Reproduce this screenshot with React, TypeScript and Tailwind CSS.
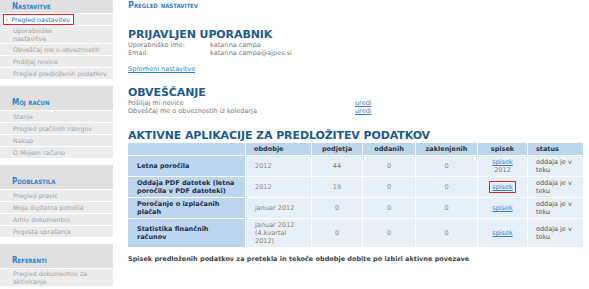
import React from "react";

interface MenuItem {
  label: React.ReactNode;
  active?: boolean;
  tall?: boolean;
}

interface MenuSection {
  title: string;
  items: MenuItem[];
  compact?: boolean;
}

const sections: MenuSection[] = [
  {
    title: "Nastavitve",
    compact: true,
    items: [
      { label: "Pregled nastavitev", active: true },
      {
        tall: true,
        label: (
          <>
            Uporabniške
            <br />
            nastavitve
          </>
        ),
      },
      { label: "Obveščaj me o obveznostih" },
      { label: "Podiljaj novice" },
      { label: "Pregled predloženih podatkov" },
    ],
  },
  {
    title: "Moj račun",
    items: [
      { label: "Stanje" },
      { label: "Pregled plačilnih nalogov" },
      { label: "Nakup" },
      { label: "O Mojem računu" },
    ],
  },
  {
    title: "Pooblastila",
    items: [
      { label: "Pregled pravic" },
      { label: "Moja digitalna potrdila" },
      { label: "Arhiv dokumentov" },
      { label: "Pogosta vprašanja" },
    ],
  },
  {
    title: "Referenti",
    items: [
      {
        tall: true,
        label: (
          <>
            Pregled dokumentov za
            <br />
            aktiviranje
          </>
        ),
      },
    ],
  },
];

interface Row {
  name: string;
  period: string;
  periodTan?: boolean;
  companies: string;
  companiesOlive?: boolean;
  submitted: string;
  locked: string;
  listYear?: string;
  boxed?: boolean;
}

const rows: Row[] = [
  { name: "Letna poročila", period: "2012", companies: "44", companiesOlive: true, submitted: "0", locked: "0", listYear: "2012" },
  { name: "Oddaja PDF datotek (letna poročila v PDF datoteki)", period: "2012", companies: "19", submitted: "0", locked: "0", boxed: true },
  { name: "Poročanje o izplačanih plačah", period: "januar 2012", periodTan: true, companies: "0", submitted: "0", locked: "0" },
  { name: "Statistika finančnih računov", period: "Januar 2012 (4.kvartal 2012)", periodTan: true, companies: "0", submitted: "0", locked: "0" },
];

const font = "font-['DejaVu_Sans',Verdana,sans-serif]";
const capsFont =
  "font-['DejaVu_Sans_Condensed','DejaVu_Sans',sans-serif] font-bold [font-variant:small-caps] text-[#2f7fc8]";

const Sidebar: React.FC = () => (
  <div className="w-[113px] shrink-0">
    {sections.map((section, i) => (
      <div key={i} className={i > 0 ? "mt-[7px]" : ""}>
        <div
          className={`bg-[#e0e0e0] pl-[12px] ${capsFont} text-[8px] leading-[9px] ${
            section.compact ? "h-[13px] pt-[2px]" : "h-[24px] pt-[12px]"
          }`}
        >
          {section.title}
        </div>
        {section.items.map((item, j) => (
          <div
            key={j}
            className={`flex items-center bg-[#ececec] border-t border-white pl-[4px] text-[6.3px] leading-[8px] ${
              item.tall ? "h-[18px]" : "h-[12px]"
            }`}
          >
            {item.active ? (
              <span className="flex items-center h-[11px] border border-[#e8202a] bg-white pl-[2px] pr-[3px] text-[#2b6fb5] -ml-[1px]">
                <span className="mr-[3px] text-[#555] text-[6px]">›</span>
                {item.label}
              </span>
            ) : (
              <span className="block pl-[9px] text-[#a3a3a3] whitespace-nowrap">{item.label}</span>
            )}
          </div>
        ))}
      </div>
    ))}
  </div>
);

const Heading: React.FC<{ children: React.ReactNode; className?: string }> = ({ children, className }) => (
  <h2 className={`text-[11px] leading-[10px] font-bold text-[#1e5a92] tracking-[-0.1px] ${className ?? ""}`}>{children}</h2>
);

const cellBase = "bg-[#e6f0f9] text-center align-middle text-[#8a8a8a] px-[4px] py-[2px]";

const App: React.FC = () => {
  return (
    <div className={`flex w-[589px] h-[289px] overflow-hidden bg-white ${font} text-[6.5px] leading-[8px]`}>
      <Sidebar />
      <div className="flex-1 pl-[15px] pr-[3px]">
        <div className={`${capsFont} text-[9px] leading-[9px] mt-[1px]`}>Pregled nastavitev</div>

        <Heading className="mt-[20px]">PRIJAVLJEN UPORABNIK</Heading>
        <div className="text-[#777] mt-[1px]">
          <div className="flex">
            <span className="w-[82px]">Uporabniško ime:</span>
            <span>katarina.campa</span>
          </div>
          <div className="flex">
            <span className="w-[82px]">Email:</span>
            <span>katarina.campa@ajpes.si</span>
          </div>
        </div>
        <a className="block mt-[8px] text-[#3a7cc2] underline">Spremeni nastavitve</a>

        <Heading className="mt-[15px]">OBVEŠČANJE</Heading>
        <div className="text-[#777] mt-[1px]">
          <div className="flex">
            <span className="w-[227px]">Pošiljaj mi novice</span>
            <a className="text-[#3a7cc2] underline">uredi</a>
          </div>
          <div className="flex">
            <span className="w-[227px]">Obveščaj me o obveznostih iz koledarja</span>
            <a className="text-[#3a7cc2] underline">uredi</a>
          </div>
        </div>

        <Heading className="mt-[16px]">AKTIVNE APLIKACIJE ZA PREDLOŽITEV PODATKOV</Heading>
        <table className="mt-[1px] w-[457px] table-fixed border-separate border-spacing-[1px] -ml-[1px]">
          <colgroup>
            <col className="w-[117px]" />
            <col className="w-[65px]" />
            <col className="w-[50px]" />
            <col className="w-[52px]" />
            <col className="w-[61px]" />
            <col className="w-[49px]" />
            <col className="w-[55px]" />
          </colgroup>
          <thead>
            <tr className="bg-[#bcd7ed] font-bold text-[#333]">
              <th className="py-[2px]"></th>
              <th className="py-[2px] text-left pl-[8px]">obdobje</th>
              <th className="py-[2px]">podjetja</th>
              <th className="py-[2px]">oddanih</th>
              <th className="py-[2px]">zaklenjenih</th>
              <th className="py-[2px]">spisek</th>
              <th className="py-[2px] text-left pl-[8px]">status</th>
            </tr>
          </thead>
          <tbody>
            {rows.map((row, i) => (
              <tr key={i}>
                <td className="bg-[#bcd7ed] font-bold text-[#1c2b4a] text-left align-middle pl-[9px] pr-[10px] py-[2px]">
                  {row.name}
                </td>
                <td className={`${cellBase} !text-left pl-[9px] ${row.periodTan ? "!text-[#9a7f57]" : ""}`}>
                  {row.period}
                </td>
                <td className={`${cellBase} ${row.companiesOlive ? "!text-[#7d7d3c]" : ""}`}>{row.companies}</td>
                <td className={cellBase}>{row.submitted}</td>
                <td className={cellBase}>{row.locked}</td>
                <td className={cellBase}>
                  <a
                    className={`text-[#3a7cc2] underline ${
                      row.boxed ? "border border-[#e8202a] px-[2px] py-[1px]" : ""
                    }`}
                  >
                    spisek
                  </a>
                  {row.listYear && <div className="text-[#777]">{row.listYear}</div>}
                </td>
                <td className={`${cellBase} !text-left !text-[#555] pl-[8px]`}>oddaja je v teku</td>
              </tr>
            ))}
          </tbody>
        </table>

        <p className="mt-[7px] font-bold text-[#444]">
          Spisek predloženih podatkov za pretekla in tekoče obdobje dobite po izbiri aktivne povezave
        </p>
      </div>
    </div>
  );
};

export default App;
